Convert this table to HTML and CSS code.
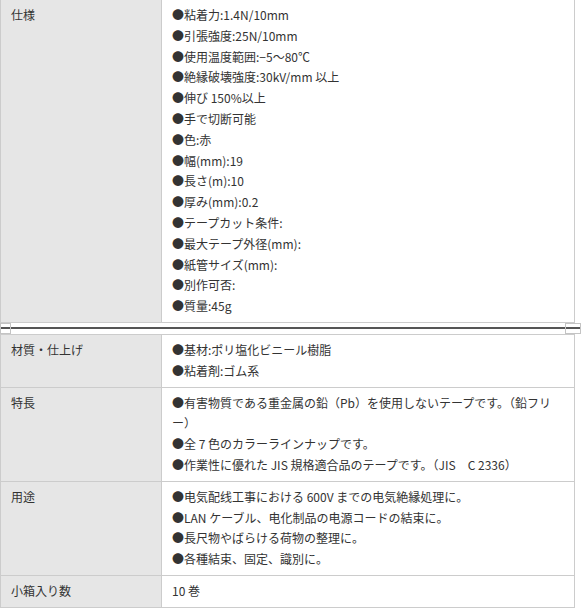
FILE: index.html
```html
<!DOCTYPE html>
<html lang="ja">
<head>
  <meta charset="UTF-8" />
  <meta name="viewport" content="width=device-width, initial-scale=1.0"/>
  <title>仕様</title>
  <link rel="stylesheet" href="styles.css">
</head>
<body>
  <table class="spec spec-top">
    <tr>
      <th>仕様</th>
      <td>
        <ul class="points">
          <li>粘着力:1.4N/10mm</li>
          <li>引張強度:25N/10mm</li>
          <li>使用温度範囲:−5〜80℃</li>
          <li>絶縁破壊強度:30kV/mm 以上</li>
          <li>伸び 150%以上</li>
          <li>手で切断可能</li>
          <li>色:赤</li>
          <li>幅(mm):19</li>
          <li>長さ(m):10</li>
          <li>厚み(mm):0.2</li>
          <li>テープカット条件:</li>
          <li>最大テープ外径(mm):</li>
          <li>紙管サイズ(mm):</li>
          <li>別作可否:</li>
          <li>質量:45g</li>
        </ul>
      </td>
    </tr>
  </table>

  <!-- splitter between the two blocks -->
  <div class="divider">
    <span class="knob"></span>
    <span class="knob knob-right"></span>
  </div>

  <table class="spec">
    <tr>
      <th>材質・仕上げ</th>
      <td>
        <ul class="points">
          <li>基材:ポリ塩化ビニール樹脂</li>
          <li>粘着剤:ゴム系</li>
        </ul>
      </td>
    </tr>
    <tr>
      <th>特長</th>
      <td>
        <ul class="points">
          <li>有害物質である重金属の鉛（Pb）を使用しないテープです。（鉛フリー）</li>
          <li>全 7 色のカラーラインナップです。</li>
          <li>作業性に優れた JIS 規格適合品のテープです。（JIS　C 2336）</li>
        </ul>
      </td>
    </tr>
    <tr>
      <th>用途</th>
      <td>
        <ul class="points">
          <li>电気配线工事における 600V までの电気絶縁処理に。</li>
          <li>LAN ケーブル、电化制品の电源コードの結束に。</li>
          <li>長尺物やばらける荷物の整理に。</li>
          <li>各種結束、固定、識別に。</li>
        </ul>
      </td>
    </tr>
    <tr>
      <th>小箱入り数</th>
      <td>10 巻</td>
    </tr>
  </table>
</body>
</html>
```

FILE: styles.css
```css
* {
  margin: 0;
  padding: 0;
  box-sizing: border-box;
}

body {
  font-family: "Noto Sans CJK JP", "Noto Sans", sans-serif;
  font-size: 12px;
  line-height: 20.8px;
  color: #333;
  background: #fff;
}

.spec {
  width: 575px;
  border-collapse: collapse;
  table-layout: fixed;
}

.spec-top {
  margin-top: -1px;
}

.spec th,
.spec td {
  border: 1px solid #ccc;
  padding: 5px 10px;
  vertical-align: top;
  text-align: left;
  font-weight: normal;
}

.spec th {
  width: 161px;
  background: #e6e6e6;
}

.points {
  list-style: none;
}

.points li::before {
  content: "●";
}

.divider {
  height: 11px;
  display: flex;
  justify-content: space-between;
  background: linear-gradient(#555, #555) center / 100% 2px no-repeat;
}

.knob {
  width: 11px;
  border: 1px solid #c4c4c4;
}

.knob-right {
  width: 16px;
}
```
